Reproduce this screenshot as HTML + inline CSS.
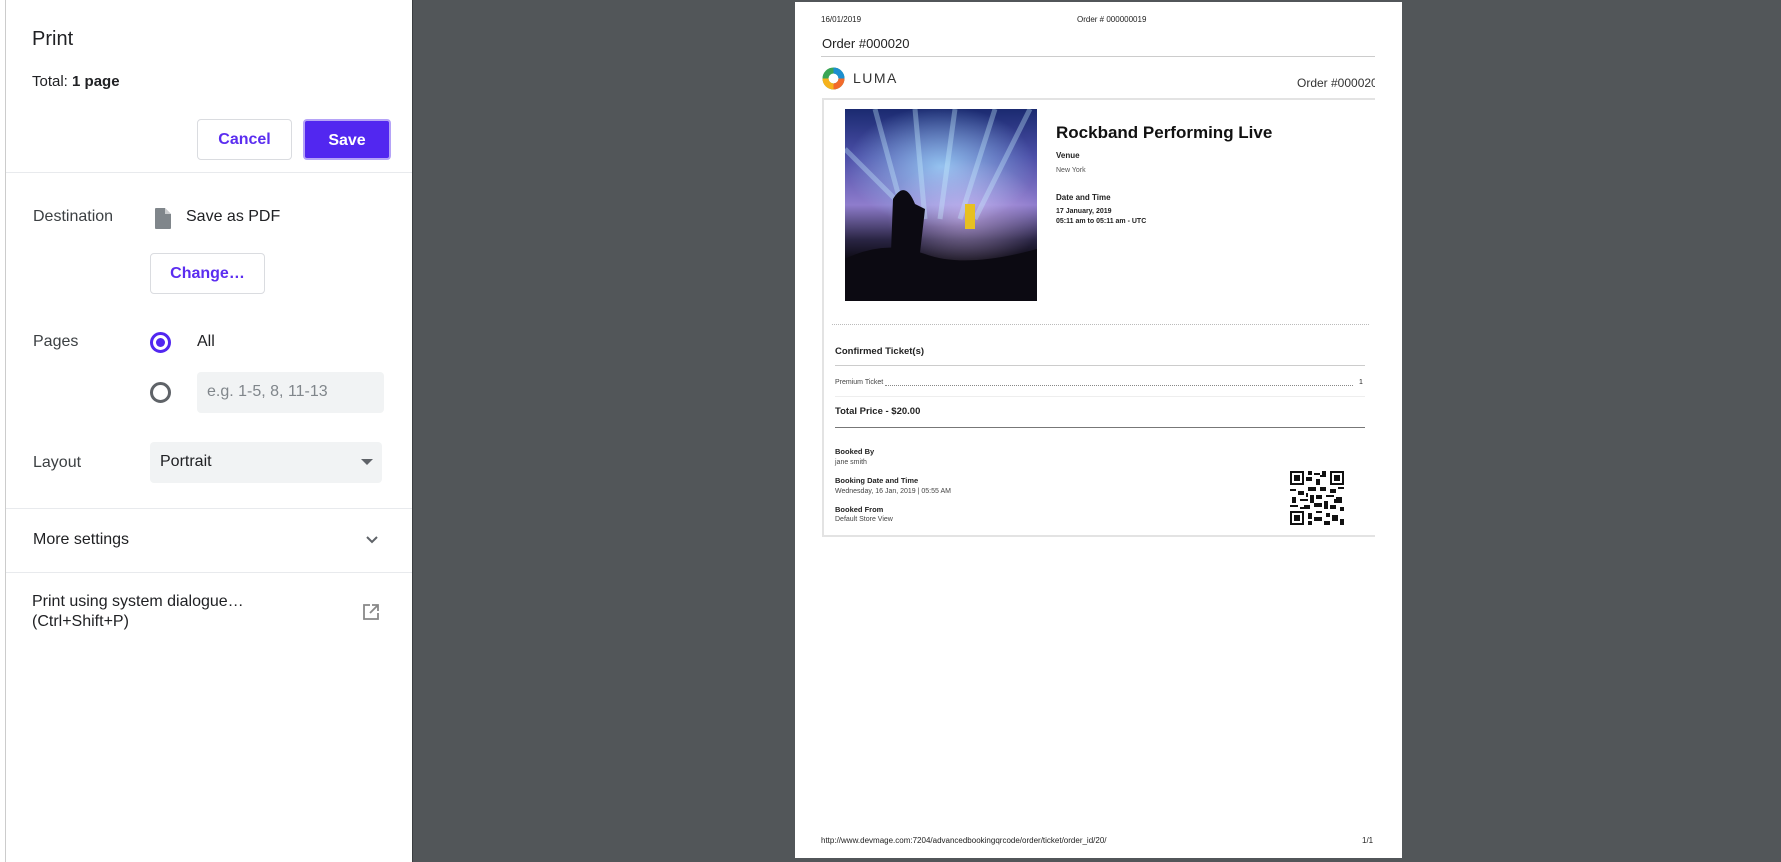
<!DOCTYPE html>
<html><head><meta charset="utf-8"><style>
*{margin:0;padding:0;box-sizing:border-box}
body{width:1781px;height:862px;overflow:hidden;background:#525659;font-family:"Liberation Sans",Arial,sans-serif;position:relative}
.a{position:absolute;white-space:nowrap}
#panel{position:absolute;left:0;top:0;width:413px;height:862px;background:#fff;border-right:1px solid #3a3d40}
#panel .edge{position:absolute;left:5px;top:0;width:1px;height:862px;background:#ccc}
.lbl{font-size:16px;color:#3c4043}
.btn{position:absolute;border:1px solid #dadce0;border-radius:4px;background:#fff;color:#5b2df0;font-size:16px;font-weight:bold;text-align:center}
.hr{position:absolute;left:6px;width:406px;height:1px;background:#e8eaed}
#page{position:absolute;left:795px;top:2px;width:607px;height:856px;background:#fff;overflow:hidden;font-family:"Liberation Sans",Arial,sans-serif;color:#222}
#clip{position:absolute;left:0;top:0;width:580px;height:856px;overflow:hidden}
.s{font-size:8px}
.b{font-weight:bold}
</style></head><body>
<div id="panel">
<div class="edge"></div>
<div class="a" style="left:32px;top:28px;font-size:20px;color:#202124">Print</div>
<div class="a" style="left:32px;top:73px;font-size:15px;color:#202124">Total: <b>1 page</b></div>
<div class="btn" style="left:197px;top:119px;width:95px;height:41px;line-height:39px">Cancel</div>
<div class="btn" style="left:303px;top:119px;width:88px;height:41px;line-height:39px;background:#5227f0;color:#fff;border:2px solid #b5a3f7">Save</div>
<div class="hr" style="top:172px"></div>
<div class="a lbl" style="left:33px;top:208px">Destination</div>
<svg class="a" style="left:153px;top:207px" width="20" height="23" viewBox="0 0 20 23"><path d="M3 1h9l6 6v14a1 1 0 0 1-1 1H3a1 1 0 0 1-1-1V2a1 1 0 0 1 1-1z" fill="#80868b"/><path d="M12 1v6h6" fill="#fff" opacity=".6"/></svg>
<div class="a lbl" style="left:186px;top:208px;color:#202124">Save as PDF</div>
<div class="btn" style="left:150px;top:253px;width:115px;height:41px;line-height:39px">Change…</div>
<div class="a lbl" style="left:33px;top:333px">Pages</div>
<div class="a" style="left:150px;top:332px;width:21px;height:21px;border-radius:50%;border:3px solid #5227f0"><div style="margin:3px;width:9px;height:9px;border-radius:50%;background:#5227f0"></div></div>
<div class="a lbl" style="left:197px;top:333px;color:#202124">All</div>
<div class="a" style="left:150px;top:382px;width:21px;height:21px;border-radius:50%;border:3px solid #5f6368"></div>
<div class="a" style="left:197px;top:372px;width:187px;height:41px;background:#f1f3f4;border-radius:4px;font-size:16px;color:#80868b;padding:11px 10px">e.g. 1-5, 8, 11-13</div>
<div class="a lbl" style="left:33px;top:454px">Layout</div>
<div class="a" style="left:150px;top:442px;width:232px;height:41px;background:#f1f3f4;border-radius:4px;font-size:16px;color:#202124;padding:11px 10px">Portrait</div>
<div class="a" style="left:361px;top:459px;width:0;height:0;border-left:6px solid transparent;border-right:6px solid transparent;border-top:6px solid #5f6368"></div>
<div class="hr" style="top:508px"></div>
<div class="a lbl" style="left:33px;top:531px;color:#202124">More settings</div>
<svg class="a" style="left:365px;top:535px" width="14" height="10" viewBox="0 0 14 10"><path d="M2 2l5 5 5-5" stroke="#5f6368" stroke-width="2" fill="none"/></svg>
<div class="hr" style="top:572px"></div>
<div class="a lbl" style="left:32px;top:592px;color:#202124;line-height:20px">Print using system dialogue…<br>(Ctrl+Shift+P)</div>
<svg class="a" style="left:362px;top:603px" width="18" height="18" viewBox="0 0 18 18"><path d="M8 2H2v14h14v-6" stroke="#888" stroke-width="1.8" fill="none"/><path d="M10 2h6v6M16 2L8 10" stroke="#888" stroke-width="1.8" fill="none"/></svg>
</div>

<div id="page"><div id="clip">
<div class="a s" style="left:26px;top:13px">16/01/2019</div>
<div class="a s" style="left:282px;top:13px">Order # 000000019</div>
<div class="a" style="left:27px;top:34px;font-size:13px">Order #000020</div>
<div class="a" style="left:26px;top:54px;width:554px;height:1px;background:#ccc"></div>
<svg class="a" style="left:27px;top:64px" width="23" height="25" viewBox="0 0 23 25"><circle cx="11.5" cy="12.5" r="8" fill="none" stroke="#3aa655" stroke-width="6"/><path d="M3.5 12.5a8 8 0 0 0 8 8" stroke="#f6b21b" stroke-width="6" fill="none"/><path d="M11.5 20.5a8 8 0 0 0 8-8" stroke="#f26a2b" stroke-width="6" fill="none"/><path d="M11.5 4.5a8 8 0 0 1 8 8" stroke="#1c8fd0" stroke-width="6" fill="none"/></svg>
<div class="a" style="left:58px;top:68px;font-size:14px;letter-spacing:1.5px;color:#333">LUMA</div>
<div class="a" style="left:502px;top:74px;font-size:12px;color:#333">Order #000020</div>
<div class="a" style="left:27px;top:96px;width:560px;height:439px;border:2px solid #e3e3e3;border-right:none"></div>
<div class="a" style="left:50px;top:107px;width:192px;height:192px;overflow:hidden;background:
radial-gradient(ellipse 40% 30% at 62% 56%,rgba(230,200,255,.5),transparent),
radial-gradient(ellipse 70% 45% at 50% 30%,rgba(160,220,255,.8),transparent 70%),
linear-gradient(#1a2a70 0%,#4c4fa8 25%,#8e7ccc 50%,#2a2544 68%,#08060c 80%,#050308 100%)">
<svg width="192" height="192" style="position:absolute;left:0;top:0"><g stroke="rgba(200,240,255,.35)" stroke-width="5"><path d="M30 0L60 110M70 0L80 110M110 0L95 110M150 0L115 110M185 0L130 110M0 40L70 110"/></g><g fill="#0c0a12"><path d="M0 150Q40 130 80 145T192 140V192H0z"/><path d="M45 170L48 90Q60 70 70 95L80 100L72 170z"/></g><rect x="120" y="95" width="10" height="25" fill="#e7c020"/></svg>
</div>
<div class="a b" style="left:261px;top:121px;font-size:17px;color:#111">Rockband Performing Live</div>
<div class="a s b" style="left:261px;top:149px">Venue</div>
<div class="a" style="left:261px;top:165px;font-size:7px;color:#555">New York</div>
<div class="a s b" style="left:261px;top:191px">Date and Time</div>
<div class="a b" style="left:261px;top:206px;font-size:7px">17 January, 2019</div>
<div class="a b" style="left:261px;top:216px;font-size:7px">05:11 am to 05:11 am - UTC</div>
<div class="a" style="left:37px;top:322px;width:537px;border-top:1px dotted #bbb"></div>
<div class="a b" style="left:40px;top:344px;font-size:9.5px">Confirmed Ticket(s)</div>
<div class="a" style="left:40px;top:363px;width:530px;height:1px;background:#ccc"></div>
<div class="a" style="left:40px;top:377px;font-size:7px;color:#444">Premium Ticket</div>
<div class="a" style="left:90px;top:383px;width:468px;border-top:1px dotted #888"></div>
<div class="a" style="left:564px;top:377px;font-size:7px">1</div>
<div class="a" style="left:40px;top:394px;width:530px;height:1px;background:#eee"></div>
<div class="a b" style="left:40px;top:404px;font-size:9.5px">Total Price - $20.00</div>
<div class="a" style="left:40px;top:425px;width:530px;height:1px;background:#777"></div>
<div class="a b" style="left:40px;top:445px;font-size:7.5px">Booked By</div>
<div class="a" style="left:40px;top:457px;font-size:7px;color:#444">jane smith</div>
<div class="a b" style="left:40px;top:474px;font-size:7.5px">Booking Date and Time</div>
<div class="a" style="left:40px;top:486px;font-size:7px;color:#444">Wednesday, 16 Jan, 2019 | 05:55 AM</div>
<div class="a b" style="left:40px;top:503px;font-size:7.5px">Booked From</div>
<div class="a" style="left:40px;top:514px;font-size:7px;color:#444">Default Store View</div>
<svg class="a" style="left:495px;top:469px" width="54" height="54" viewBox="0 0 27 27" shape-rendering="crispEdges">
<rect width="27" height="27" fill="#fff"/>
<g fill="#111">
<path d="M0 0h7v7H0zM20 0h7v7h-7zM0 20h7v7H0z"/>
</g><g fill="#fff"><path d="M1 1h5v5H1zM21 1h5v5h-5zM1 21h5v5H1z"/></g>
<g fill="#111"><path d="M2 2h3v3H2zM22 2h3v3h-3zM2 22h3v3H2z"/>
<path d="M9 0h2v2H9zM12 1h3v1h-3zM16 0h2v3h-2zM8 3h3v2H8zM13 4h2v3h-2zM9 8h4v2H9zM0 9h3v1H0zM4 10h3v2H4zM15 8h3v2h-3zM20 9h3v2h-3zM24 8h3v1h-3zM1 13h2v3H1zM5 14h4v1H5zM10 12h2v4h-2zM13 12h3v2h-3zM18 12h4v1h-4zM23 13h3v3h-3zM0 17h4v1H0zM7 17h3v2H7zM12 16h4v2h-4zM17 15h2v4h-2zM20 17h3v2h-3zM25 18h2v2h-2zM9 21h2v3H9zM13 20h3v1h-3zM12 23h4v2h-4zM18 21h2v2h-2zM21 22h3v3h-3zM25 24h2v3h-2zM9 25h2v2H9zM17 25h3v2h-3zM8 11h1v2H8zM15 2h1v1h-1zM22 14h1v2h-1zM5 18h2v1H5z"/></g>
</svg>
</div>
<div class="a s" style="left:26px;top:834px">http://www.devmage.com:7204/advancedbookingqrcode/order/ticket/order_id/20/</div>
<div class="a s" style="left:567px;top:834px">1/1</div>
</div>
</body></html>
